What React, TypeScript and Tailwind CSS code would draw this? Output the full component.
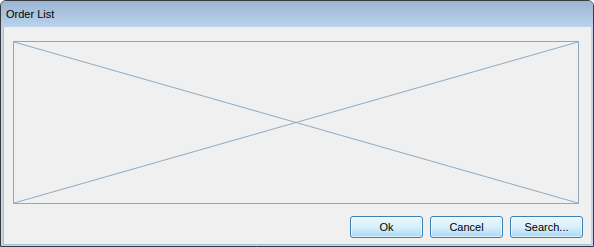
export default function App() {
  const font = { fontFamily: '"Liberation Sans", Arial, sans-serif' };
  return (
    <div
      className="w-[594px] h-[247px] overflow-hidden rounded-t-[6px] border border-[#3b3b3b] bg-[#c3d7ec] flex flex-col"
      style={font}
    >
      {/* Title bar */}
      <div className="h-[26px] shrink-0 bg-gradient-to-b from-[#9bb6d4] to-[#bad2eb] flex items-center pl-[5px]">
        <span className="text-[11px] text-black leading-none">Order List</span>
      </div>

      {/* Client area */}
      <div className="flex-1 flex pl-[2px] pr-[2px] pb-[1px]">
        <div className="flex-1 bg-[#f0f0f0] border-l border-b border-[#a7c0dc] pl-[9px] pr-[8px] pt-[14px] flex flex-col">
          <div className="relative w-[566px] h-[163px] border border-[#8ea8bf]">
            <svg
              className="absolute inset-0 w-full h-full"
              viewBox="0 0 564 161"
              preserveAspectRatio="none"
            >
              <line x1="0" y1="0" x2="564" y2="161" stroke="#8eaac2" strokeWidth="1" />
              <line x1="0" y1="161" x2="564" y2="0" stroke="#8eaac2" strokeWidth="1" />
            </svg>
          </div>

          <div className="flex justify-end gap-[7px] mt-[12px]">
            {["Ok", "Cancel", "Search..."].map((label) => (
              <button
                key={label}
                className="w-[73px] h-[22px] rounded-[3px] border border-[#3c7fb1] bg-gradient-to-b from-[#eaf6fd] via-[#d9f0fc] to-[#a7d9f5] text-[11px] text-black leading-none shadow-[inset_0_0_0_1px_rgba(255,255,255,0.6)]"
              >
                {label}
              </button>
            ))}
          </div>
        </div>
      </div>
    </div>
  );
}
